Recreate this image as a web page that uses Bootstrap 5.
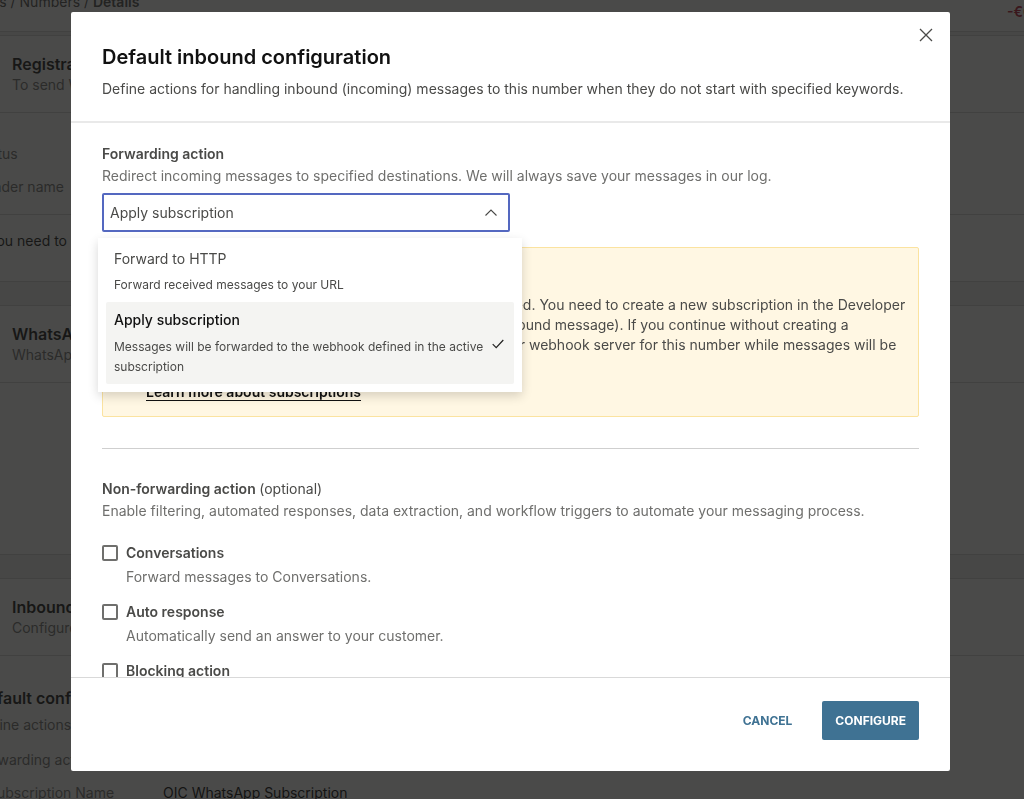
<!DOCTYPE html>
<html lang="en">
<head>
    <meta charset="UTF-8">
    <meta name="viewport" content="width=device-width, initial-scale=1.0">
    <title>Default inbound configuration</title>
    <link rel="stylesheet" href="https://cdn.jsdelivr.net/npm/bootstrap@5.3.0/dist/css/bootstrap.min.css">
    <style>
        body {
            font-family: Inter, "Liberation Sans", sans-serif;
            font-size: 14px;
            line-height: 20px;
            color: #4a4a48;
            overflow: hidden;
        }
        h1, h2, h3, p { margin: 0; }
        h3, .strong-text { font-size: 14px; line-height: 20px; font-weight: 600; }
        .muted-text { color: #6f6f6d; }

        /* page behind the dialog */
        .page { height: 100vh; overflow: hidden; background: #f1f1f1; }
        .page-inner { margin-left: -24px; white-space: nowrap; }
        .topbar { height: 32px; background: #fff; border-bottom: 1px solid #d4d4d4; margin-bottom: 3px; padding-right: 2px; }
        .crumbs { margin: -8px 0 0 -8px; }
        .crumbs a { color: #4a4a48; text-decoration: none; }
        .balance { width: 38px; margin-right: -23px; margin-top: 2px; color: #b3122f; }
        .panel { background: #fff; border-top: 1px solid #d4d4d4; border-bottom: 1px solid #d4d4d4; margin-bottom: 23px; }
        .panel-top { height: 77px; padding: 17px 36px; border-bottom: 1px solid #d4d4d4; }
        .panel-top h2, .config-title { font-size: 16px; line-height: 22px; font-weight: 600; color: #111; }
        .panel-rows { padding: 31px 0 4px; }
        .panel-rows > div { margin-bottom: 13px; }
        .panel-note { height: 67px; padding: 16px 12px; border-top: 1px solid #d4d4d4; color: #111; }
        .panel-blank { height: 171px; }
        .config-title { margin-bottom: 4px; }
        .config-text { line-height: 24px; }
        .sub-row { padding-left: 12px; }
        .row-label { width: 175px; }

        /* dialog */
        .modal-backdrop { --bs-backdrop-bg: #1a1a18; --bs-backdrop-opacity: .79; }
        .modal-dialog { max-width: none; height: calc(100% - 40px); margin: 12px 74px 28px 71px; }
        .modal-content { height: 100%; border: 0; border-radius: 2px; color: inherit; }
        .modal-header { padding: 33px 31px 22px; border-bottom: 2px solid #e9e9e9; align-items: flex-start; }
        .modal-header h1 { font-size: 20px; line-height: 24px; font-weight: 600; color: #111; margin-bottom: 10px; }
        .modal-header .close-btn { margin: -18px -15px 0 0; }
        .close-btn { border: 0; background: none; padding: 1px; line-height: 0; }
        .modal-body { padding: 21px 31px 0; overflow-y: auto; scrollbar-width: none; }
        .modal-body::-webkit-scrollbar { display: none; }
        .modal-footer { padding: 23px 31px 31px; border-top: 1px solid #d9d9d9; gap: 17px; }
        .modal-footer > * { margin: 0; }
        .modal-footer .btn { height: 39px; padding: 0 13px; border: 0; border-radius: 2px; font-size: 12px; font-weight: 700; }
        .btn-cancel { color: #3f7293; }
        .btn-configure, .btn-configure:hover { background: #3f7293; color: #fff; }
        .section-text { margin-top: 2px; }

        .action-select { position: relative; width: 408px; max-width: 100%; margin-top: 7px; }
        .action-select .form-select {
            height: 39px;
            padding: 0 36px 0 6px;
            border: 2px solid #5468c0;
            border-radius: 2px;
            font-size: 14px;
            color: #4a4a48;
            background-image: url("data:image/svg+xml,%3csvg xmlns='http://www.w3.org/2000/svg' viewBox='0 0 12 12'%3e%3cpath fill='none' stroke='%234a4a48' stroke-width='1.1' d='M.5 8.5 6 3l5.5 5.5'/%3e%3c/svg%3e");
            background-size: 12px 12px;
            background-position: right 11px center;
        }
        .action-menu {
            position: absolute;
            z-index: 10;
            top: 45px;
            left: -4px;
            width: 424px;
            padding: 8px;
            background: #fff;
            list-style: none;
            margin: 0;
            box-shadow: 0 4px 10px rgba(0, 0, 0, .16);
        }
        .action-menu li { padding: 3px 8px 7px; font-size: 12px; border-radius: 2px; }
        .action-menu .option-name { font-size: 14px; margin-bottom: 6px; }
        .action-menu li.chosen { padding: 8px 8px 7px; background: #f4f4f2; }
        .action-menu li.chosen .option-name { font-weight: 500; color: #111; margin-bottom: 7px; }
        .tick { flex: none; margin: 0 2px 0 4px; }

        .notice { margin-top: 15px; padding: 15px 20px 14px 43px; border: 1px solid #fbe3a0; border-radius: 2px; background: #fff7e3; }
        .notice p { white-space: nowrap; margin: 12px 0 7px; }
        .notice a { color: #111; font-weight: 600; text-underline-offset: 3px; }
        .rule { margin: 31px 0 30px; border-top: 1px solid #cfcfcf; opacity: 1; }
        .action-list { margin-top: 22px; }
        .action-check { display: flex; gap: 8px; margin-bottom: 15px; padding: 0; }
        .action-check .form-check-input { flex: none; width: 16px; height: 16px; margin: 2px 0 0; border: 2px solid #6f6f6d; border-radius: 2px; }
        .action-check label { display: block; }
        .action-check p { margin-top: 4px; }
    </style>
</head>
<body>
    <div class="page">
        <div class="page-inner">
            <header class="topbar d-flex justify-content-between">
                <nav class="crumbs"><a href="#">Users</a> / <a href="#">Numbers</a> / <span class="strong-text">Details</span></nav>
                <span class="balance strong-text">-€0.00</span>
            </header>
            <section class="panel">
                <div class="panel-top">
                    <h2>Registration</h2>
                    <p class="muted-text">To send WhatsApp messages</p>
                </div>
                <div class="panel-rows">
                    <div class="muted-text">Status</div>
                    <div class="muted-text">Sender name</div>
                </div>
                <p class="panel-note">You need to complete registration</p>
            </section>
            <section class="panel">
                <div class="panel-top">
                    <h2>WhatsApp</h2>
                    <p class="muted-text">WhatsApp details</p>
                </div>
                <div class="panel-blank"></div>
            </section>
            <section class="panel">
                <div class="panel-top">
                    <h2>Inbound</h2>
                    <p class="muted-text">Configure actions</p>
                </div>
                <div class="panel-rows">
                    <div>
                        <h2 class="config-title">Default configuration</h2>
                        <p class="config-text muted-text">Define actions</p>
                    </div>
                    <div class="muted-text">Forwarding action</div>
                    <div class="sub-row d-flex">
                        <span class="row-label muted-text">Subscription Name</span>
                        <span class="text-black">OIC WhatsApp Subscription</span>
                    </div>
                </div>
            </section>
        </div>
    </div>

    <div class="modal-backdrop show"></div>
    <div class="modal show d-block" role="dialog" aria-labelledby="dialogTitle">
        <div class="modal-dialog">
            <div class="modal-content">
                <div class="modal-header">
                    <div>
                        <h1 id="dialogTitle">Default inbound configuration</h1>
                        <p>Define actions for handling inbound (incoming) messages to this number when they do not start with specified keywords.</p>
                    </div>
                    <button type="button" class="close-btn" aria-label="Close">
                        <svg width="14" height="14" viewBox="0 0 14 14" fill="none" stroke="#4a4a48" stroke-width="1.3"><path d="M1 1l12 12M13 1L1 13"/></svg>
                    </button>
                </div>

                <div class="modal-body">
                    <label class="strong-text d-block" for="forwardingAction">Forwarding action</label>
                    <p class="section-text muted-text">Redirect incoming messages to specified destinations. We will always save your messages in our log.</p>
                    <div class="action-select">
                        <select class="form-select" id="forwardingAction">
                            <option>Forward to HTTP</option>
                            <option selected>Apply subscription</option>
                        </select>
                        <ul class="action-menu">
                            <li>
                                <div class="option-name">Forward to HTTP</div>
                                <div>Forward received messages to your URL</div>
                            </li>
                            <li class="chosen d-flex align-items-center justify-content-between">
                                <div>
                                    <div class="option-name">Apply subscription</div>
                                    <div>Messages will be forwarded to the webhook defined in the active subscription</div>
                                </div>
                                <svg class="tick" width="12" height="10" viewBox="0 0 12 10" fill="none" stroke="#222" stroke-width="1.2"><path d="M.7 5.2l3.5 3.5L11.3 1"/></svg>
                            </li>
                        </ul>
                    </div>

                    <div class="notice">
                        <h3>Subscription is missing</h3>
                        <p>Your number doesn't have any active subscription defined. You need to create a new subscription in the Developer<br>
                            section of the web interface first (with type of event: inbound message). If you continue without creating a<br>
                            subscription, no messages will ever be forwarded to your webhook server for this number while messages will be<br>
                            saved in the log.</p>
                        <a href="#">Learn more about subscriptions</a>
                    </div>

                    <hr class="rule">

                    <h3>Non-forwarding action <span class="fw-normal">(optional)</span></h3>
                    <p class="section-text muted-text">Enable filtering, automated responses, data extraction, and workflow triggers to automate your messaging process.</p>
                    <div class="action-list">
                        <div class="action-check">
                            <input class="form-check-input" type="checkbox" id="conversations">
                            <div>
                                <label class="strong-text" for="conversations">Conversations</label>
                                <p class="muted-text">Forward messages to Conversations.</p>
                            </div>
                        </div>
                        <div class="action-check">
                            <input class="form-check-input" type="checkbox" id="autoResponse">
                            <div>
                                <label class="strong-text" for="autoResponse">Auto response</label>
                                <p class="muted-text">Automatically send an answer to your customer.</p>
                            </div>
                        </div>
                        <div class="action-check">
                            <input class="form-check-input" type="checkbox" id="blockingAction">
                            <label class="strong-text" for="blockingAction">Blocking action</label>
                        </div>
                    </div>
                </div>

                <div class="modal-footer">
                    <button type="button" class="btn btn-cancel">CANCEL</button>
                    <button type="button" class="btn btn-configure">CONFIGURE</button>
                </div>
            </div>
        </div>
    </div>

    <script src="https://cdn.jsdelivr.net/npm/bootstrap@5.3.0/dist/js/bootstrap.bundle.min.js"></script>
</body>
</html>
